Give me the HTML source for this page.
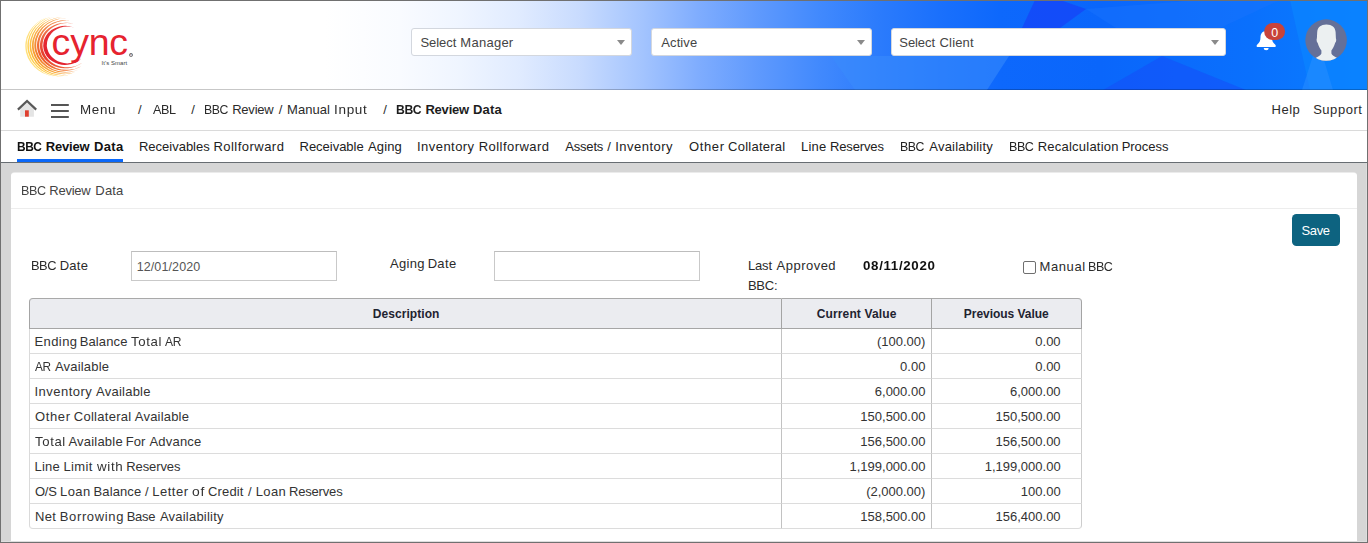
<!DOCTYPE html>
<html lang="en">
<head>
<meta charset="utf-8">
<title>BBC Review Data</title>
<style>
*{box-sizing:border-box;margin:0;padding:0}
html,body{width:1368px;height:543px;overflow:hidden;background:#d6d6d6}
body{position:relative;font-family:"Liberation Sans","DejaVu Sans",sans-serif;font-size:13px;color:#2b2b2b}
.t{position:absolute;display:block;white-space:nowrap;line-height:16px}
th,td{position:relative;font-weight:normal;text-align:left}
.b{position:absolute}
#header{left:0;top:0;width:1368px;height:90px;background:linear-gradient(90deg,#fff 0,#fff 325px,#f9fbff 400px,#eff5ff 460px,#e0ebff 520px,#c8dbfe 580px,#a5c5fe 640px,#7eacfe 700px,#5e99fd 760px,#4189fd 820px,#2b7bfc 880px,#1a70fc 940px,#0d68fc 1000px,#0a66fb 1100px,#0a70fd 1250px,#0a7eff 1368px)}
.sel{position:absolute;top:28px;height:28px;background:#fff;border:1px solid #d3d7de;border-radius:3px}
.sel i{position:absolute;right:6px;top:11px;width:0;height:0;border-left:4px solid transparent;border-right:4px solid transparent;border-top:5px solid #8a8a8a}
.inp{position:absolute;top:251px;width:206px;height:30px;border:1px solid #c9c9c9;border-top-color:#bdbdbd;background:#fff}
table{position:absolute;left:29px;top:298px;width:1053px;border-collapse:separate;border-spacing:0}
th{height:31px;background:#ebecf0;border-top:1px solid #a9a9a9;border-bottom:1px solid #a6a6a6;border-right:1px solid #a4a4a4}
td{height:25px;border-bottom:1px solid #dcdcdc;border-right:1px solid #c2c2c2}
th:first-child{border-left:1px solid #a4a4a4;border-top-left-radius:4px}
th:last-child{border-top-right-radius:4px}
td:first-child{border-left:1px solid #dadada}
td:last-child{border-right-color:#cdcdcd}
tr:last-child td:first-child{border-bottom-left-radius:4px}
tr:last-child td:last-child{border-bottom-right-radius:4px}
</style>
</head>
<body>
<div class="b" id="header"></div>
<svg class="b" style="left:820px;top:0" width="548" height="90" viewBox="820 0 548 90">
<polygon points="831,56 1009,56 987,90 855,90" fill="#3a8cfc" opacity=".55"/>
<polygon points="1035,0 1060,0 1086,9 1060,28 1022,28" fill="#1546f8" opacity=".8"/>
<polygon points="1103,90 1162,56 1246,90" fill="#1450f8" opacity=".6"/>
<polygon points="1086,9 1200,0 1280,0 1160,56" fill="#1a74fc" opacity=".45"/>
<polygon points="1290,0 1368,0 1368,90 1310,90" fill="#0a84ff" opacity=".7"/>
<polygon points="1302,90 1318,40 1333,90" fill="#2a90ff" opacity=".5"/>
</svg>
<div class="b" style="left:0;top:89px;width:1368px;height:1px;background:rgba(0,0,0,.22)"></div>
<div class="b" style="left:0;top:90px;width:1368px;height:40px;background:#fff"></div>
<div class="b" style="left:0;top:130px;width:1368px;height:1px;background:#dadada"></div>
<div class="b" style="left:0;top:131px;width:1368px;height:31px;background:#fff"></div>
<div class="b" style="left:0;top:162px;width:1368px;height:1px;background:#676d72"></div>
<svg class="b" style="left:0;top:0" width="160" height="89" viewBox="0 0 160 89">
<defs><linearGradient id="lg0" x1="0" y1="0" x2=".45" y2="1"><stop offset="0" stop-color="#e63739"/><stop offset=".6" stop-color="#e3202e"/><stop offset="1" stop-color="#e3202e"/></linearGradient><linearGradient id="lg1" x1="0" y1="0" x2=".45" y2="1"><stop offset="0" stop-color="#f38e5b"/><stop offset=".6" stop-color="#e73b2c"/><stop offset="1" stop-color="#ed6039"/></linearGradient><linearGradient id="lg2" x1="0" y1="0" x2=".45" y2="1"><stop offset="0" stop-color="#f69e5a"/><stop offset=".6" stop-color="#ec5a29"/><stop offset="1" stop-color="#f17837"/></linearGradient><linearGradient id="lg3" x1="0" y1="0" x2=".45" y2="1"><stop offset="0" stop-color="#f8ae58"/><stop offset=".6" stop-color="#f17a27"/><stop offset="1" stop-color="#f49035"/></linearGradient><linearGradient id="lg4" x1="0" y1="0" x2=".45" y2="1"><stop offset="0" stop-color="#fabe5c"/><stop offset=".6" stop-color="#f69a2d"/><stop offset="1" stop-color="#f8a83a"/></linearGradient><linearGradient id="lg5" x1="0" y1="0" x2=".45" y2="1"><stop offset="0" stop-color="#fdcc5f"/><stop offset=".6" stop-color="#fbb534"/><stop offset="1" stop-color="#fcbc3f"/></linearGradient><linearGradient id="lg6" x1="0" y1="0" x2=".45" y2="1"><stop offset="0" stop-color="#ffd96d"/><stop offset=".6" stop-color="#ffd050"/><stop offset="1" stop-color="#ffd054"/></linearGradient><linearGradient id="lg7" x1="0" y1="0" x2=".45" y2="1"><stop offset="0" stop-color="#ffe182"/><stop offset=".6" stop-color="#ffe07a"/><stop offset="1" stop-color="#ffdc74"/></linearGradient><filter id="bl" x="-10%" y="-10%" width="120%" height="120%"><feGaussianBlur stdDeviation=".42"/></filter></defs>
<g filter="url(#bl)"><path transform="translate(65.1 0) scale(1.12 1) translate(-65.1 0)" d="M73.36 27.73A19.55 19.55 0 1 0 79.86 58.28A18.36 18.36 0 1 1 73.36 27.73Z" fill="url(#lg0)"/>
<path transform="translate(65.5 0) scale(1.12 1) translate(-65.5 0)" d="M72.56 23.76A22.86 22.86 0 1 0 80.79 62.49A22.10 22.10 0 1 1 72.56 23.76Z" fill="url(#lg1)"/>
<path transform="translate(65.2 0) scale(1.12 1) translate(-65.2 0)" d="M70.00 20.78A25.18 25.18 0 1 0 79.64 66.13A24.65 24.65 0 1 1 70.00 20.78Z" fill="url(#lg2)"/>
<path transform="translate(64.8 0) scale(1.12 1) translate(-64.8 0)" d="M66.70 18.23A27.23 27.23 0 1 0 77.58 69.44A26.88 26.88 0 1 1 66.70 18.23Z" fill="url(#lg3)"/>
<path transform="translate(64.0 0) scale(1.12 1) translate(-64.0 0)" d="M62.50 16.88A28.66 28.66 0 1 0 74.27 72.26A28.47 28.47 0 1 1 62.50 16.88Z" fill="url(#lg4)"/>
<path transform="translate(62.9 0) scale(1.12 1) translate(-62.9 0)" d="M57.72 16.28A29.82 29.82 0 1 0 70.11 74.59A29.81 29.81 0 0 1 57.72 16.28Z" fill="url(#lg5)"/>
<path transform="translate(61.5 0) scale(1.12 1) translate(-61.5 0)" d="M52.57 16.60A30.54 30.54 0 0 0 65.22 76.11A30.72 30.72 0 0 1 52.57 16.60Z" fill="url(#lg6)"/>
<path transform="translate(60.2 0) scale(1.12 1) translate(-60.2 0)" d="M47.53 17.53A31.16 31.16 0 0 0 60.20 77.16A31.56 31.56 0 0 1 47.53 17.53Z" fill="url(#lg7)"/></g>
<text x="51.6" y="54.7" font-family="'Liberation Sans',sans-serif" font-size="37.5" fill="#e6232f" letter-spacing="-0.2">cync</text>
<text x="101.5" y="65" font-family="'Liberation Sans',sans-serif" font-size="6" fill="#444" letter-spacing=".05">It's Smart</text>
<circle cx="131" cy="55" r="1.6" fill="none" stroke="#666" stroke-width=".8"/>
<text x="129.9" y="56" font-family="'Liberation Sans',sans-serif" font-size="2.8" fill="#666">R</text>
</svg>
<div class="sel" style="left:411px;width:221px">
<span class="t" style="left:8.54px;top:6px;letter-spacing:-0.084px;color:#444;">Select</span>
<span class="t" style="left:48.34px;top:6px;letter-spacing:0.26px;color:#444;">Manager</span>
<i></i></div>
<div class="sel" style="left:651px;width:221px">
<span class="t" style="left:9.3px;top:6px;letter-spacing:0.088px;color:#444;">Active</span>
<i></i></div>
<div class="sel" style="left:891px;width:335px">
<span class="t" style="left:7.34px;top:6px;letter-spacing:-0.084px;color:#444;">Select</span>
<span class="t" style="left:47.58px;top:6px;letter-spacing:0.148px;color:#444;">Client</span>
<i></i></div>
<svg class="b" style="left:1250px;top:14px" width="110" height="56" viewBox="1250 14 110 56">
<path d="M1266.200 31c-3.700 0-5.700 2.600-5.700 6.300c0 3.200-.9 5.400-3.200 7.300c-.5.500-.7.900-.7 1.300c0 .6.500 1.100 1.200 1.100h16.800c.7 0 1.200-.5 1.200-1.100c0-.4-.2-.8-.7-1.300c-2.300-1.900-3.200-4.100-3.200-7.300c0-3.700-2-6.300-5.700-6.300z" fill="#fff"/>
<path d="M1263.700 48a2.500 2.300 0 0 0 5 0z" fill="#fff"/>
<rect x="1264.200" y="23.100" width="20.800" height="16.800" rx="8.200" fill="#c8433a"/>
<text x="1274.700" y="37.200" text-anchor="middle" font-family="'Liberation Sans',sans-serif" font-size="12.500" fill="#fff">0</text>
<circle cx="1326.100" cy="40.100" r="20.800" fill="#657098"/>
<clipPath id="av"><circle cx="1326.100" cy="40.100" r="20.600"/></clipPath>
<g clip-path="url(#av)" fill="#ecf0f1">
<path d="M1326.400 24.600c-5.700 0-8.800 2.800-9.200 7.400l-.3 6.300c-.6 1.600-.3 3.600.8 4.700c.9 3 2.300 5.500 3.700 7.500v3c-.4 2-3.400 3-6.900 5l-2.500 3.500v1h28.800v-1l-2.500-3.500c-3.500-2-6.500-3-6.900-5v-3c1.400-2 2.800-4.500 3.700-7.500c1.100-1.100 1.400-3.100.8-4.700l-.3-6.300c-.4-4.600-3.500-7.400-9.200-7.400z"/>
</g>
</svg>
<svg class="b" style="left:14px;top:96px" width="60" height="26" viewBox="14 96 60 26">
<path d="M20.200 108.500v8.200h13.700v-8.200l-6.850-6.400z" fill="#e4e4e4"/>
<rect x="25" y="110.300" width="3.800" height="6.400" fill="#df4030"/>
<path d="M17.900 109.600l9.150-8.700l9.150 8.700" fill="none" stroke="#585858" stroke-width="2.200" stroke-linecap="butt" stroke-linejoin="miter"/>
<rect x="51" y="104" width="17.800" height="2" fill="#555"/>
<rect x="51" y="110" width="17.800" height="2" fill="#555"/>
<rect x="51" y="116" width="17.800" height="2" fill="#555"/>
</svg>
<span class="t" style="left:79.71px;top:102px;letter-spacing:0.65px;transform-origin:0 0;transform:scaleX(1.0291);">Menu</span>
<span class="t" style="left:137.9px;top:102px;">/</span>
<span class="t" style="left:152.8px;top:102px;letter-spacing:-0.45px;transform-origin:0 0;transform:scaleX(0.9719);">ABL</span>
<span class="t" style="left:191.3px;top:102px;">/</span>
<span class="t" style="left:203.75px;top:102px;letter-spacing:-0.45px;transform-origin:0 0;transform:scaleX(0.9438);">BBC</span>
<span class="t" style="left:232.14px;top:102px;letter-spacing:-0.202px;">Review</span>
<span class="t" style="left:278.8px;top:102px;">/</span>
<span class="t" style="left:287.04px;top:102px;letter-spacing:0.05px;">Manual</span>
<span class="t" style="left:334.46px;top:102px;letter-spacing:0.65px;transform-origin:0 0;transform:scaleX(1.0404);">Input</span>
<span class="t" style="left:383.2px;top:102px;">/</span>
<span class="t" style="left:1271.54px;top:102px;letter-spacing:0.49px;">Help</span>
<span class="t" style="left:1313.14px;top:102px;letter-spacing:0.547px;">Support</span>
<span class="t" style="left:396.24px;top:102px;letter-spacing:-0.45px;font-weight:bold;color:#1d1d1d;transform-origin:0 0;transform:scaleX(0.9377);">BBC</span>
<span class="t" style="left:425.39px;top:102px;letter-spacing:-0.193px;font-weight:bold;color:#1d1d1d;">Review</span>
<span class="t" style="left:472.89px;top:102px;letter-spacing:0.251px;font-weight:bold;color:#1d1d1d;">Data</span>
<span class="t" style="left:16.86px;top:139px;letter-spacing:-0.45px;font-weight:bold;color:#111;transform-origin:0 0;transform:scaleX(0.9148);">BBC</span>
<span class="t" style="left:45.79px;top:139px;letter-spacing:-0.173px;font-weight:bold;color:#111;">Review</span>
<span class="t" style="left:94.09px;top:139px;letter-spacing:0.318px;font-weight:bold;color:#111;">Data</span>
<div class="b" style="left:17px;top:159px;width:106px;height:3px;background:#0a68fa"></div>
<span class="t" style="left:138.91px;top:139px;letter-spacing:0.002px;color:#222;">Receivables</span>
<span class="t" style="left:213.44px;top:139px;letter-spacing:0.471px;color:#222;">Rollforward</span>
<span class="t" style="left:299.54px;top:139px;letter-spacing:-0.023px;color:#222;">Receivable</span>
<span class="t" style="left:368.1px;top:139px;letter-spacing:0.086px;color:#222;">Aging</span>
<span class="t" style="left:417.01px;top:139px;letter-spacing:0.452px;color:#222;">Inventory</span>
<span class="t" style="left:478.64px;top:139px;letter-spacing:0.471px;color:#222;">Rollforward</span>
<span class="t" style="left:565.2px;top:139px;letter-spacing:-0.175px;color:#222;">Assets</span>
<span class="t" style="left:607.2px;top:139px;color:#222;">/</span>
<span class="t" style="left:615.31px;top:139px;letter-spacing:0.464px;color:#222;">Inventory</span>
<span class="t" style="left:689.04px;top:139px;letter-spacing:0.613px;color:#222;">Other</span>
<span class="t" style="left:728.08px;top:139px;letter-spacing:0.249px;color:#222;">Collateral</span>
<span class="t" style="left:801.04px;top:139px;letter-spacing:0.176px;color:#222;">Line</span>
<span class="t" style="left:829.94px;top:139px;letter-spacing:-0.13px;color:#222;">Reserves</span>
<span class="t" style="left:900.2px;top:139px;letter-spacing:-0.45px;color:#222;transform-origin:0 0;transform:scaleX(0.9458);">BBC</span>
<span class="t" style="left:929.3px;top:139px;letter-spacing:0.211px;color:#222;">Availability</span>
<span class="t" style="left:1009.18px;top:139px;letter-spacing:-0.45px;color:#222;transform-origin:0 0;transform:scaleX(0.9623);">BBC</span>
<span class="t" style="left:1037.74px;top:139px;letter-spacing:0.226px;color:#222;">Recalculation</span>
<span class="t" style="left:1121.64px;top:139px;letter-spacing:-0.027px;color:#222;">Process</span>
<div class="b" style="left:11px;top:172px;width:1346px;height:380px;background:#ebebeb;border-radius:4px 4px 0 0"></div>
<div class="b" style="left:11px;top:173px;width:1346px;height:380px;background:#fff;border-radius:3px 3px 0 0"></div>
<div class="b" style="left:11px;top:208px;width:1346px;height:1px;background:#ededed"></div>
<span class="t" style="left:20.67px;top:182.5px;letter-spacing:-0.45px;color:#444;transform-origin:0 0;transform:scaleX(0.9664);">BBC</span>
<span class="t" style="left:49.24px;top:182.5px;letter-spacing:-0.222px;color:#444;">Review</span>
<span class="t" style="left:95.34px;top:182.5px;letter-spacing:0.161px;color:#444;">Data</span>
<div class="b" style="left:1292px;top:214px;width:48px;height:32px;border-radius:4.5px;background:#0d6380"><span class="t" style="left:9.6px;top:9px;letter-spacing:-0.4px;color:#fff;">Save</span></div>
<span class="t" style="left:30.85px;top:258px;letter-spacing:-0.45px;transform-origin:0 0;transform:scaleX(0.9870);">BBC</span>
<span class="t" style="left:59.74px;top:258px;letter-spacing:0.248px;">Date</span>
<div class="inp" style="left:131px"><span class="t" style="left:4.66px;top:7.4px;font-size:12.5px;letter-spacing:0.114px;color:#555;">12/01/2020</span></div>
<span class="t" style="left:390.1px;top:255.5px;letter-spacing:0.311px;">Aging</span>
<span class="t" style="left:427.64px;top:255.5px;letter-spacing:0.348px;">Date</span>
<div class="inp" style="left:494px"></div>
<span class="t" style="left:747.94px;top:258.3px;letter-spacing:-0.153px;">Last</span>
<span class="t" style="left:776.6px;top:258.3px;letter-spacing:0.478px;">Approved</span>
<span class="t" style="left:747.94px;top:278.3px;letter-spacing:-0.235px;">BBC:</span>
<span class="t" style="left:863.09px;top:258.3px;letter-spacing:0.65px;font-weight:bold;color:#111;transform-origin:0 0;transform:scaleX(1.0243);">08/11/2020</span>
<div class="b" style="left:1023px;top:261px;width:13px;height:13px;border:1px solid #6f6f6f;background:#fff;border-radius:2px"></div>
<span class="t" style="left:1039.44px;top:259.2px;letter-spacing:0.61px;">Manual</span>
<span class="t" style="left:1088.48px;top:259.2px;letter-spacing:-0.45px;transform-origin:0 0;transform:scaleX(0.9623);">BBC</span>
<table>
<tr><th style="width:753px"><span class="t" style="left:342.8px;top:6.6px;font-size:12px;letter-spacing:0.06px;font-weight:bold;color:#1f2330;">Description</span></th><th style="width:150px"><span class="t" style="left:34.7px;top:6.6px;font-size:12px;letter-spacing:0.14px;font-weight:bold;color:#1f2330;">Current Value</span></th><th><span class="t" style="left:31.8px;top:6.6px;font-size:12px;letter-spacing:-0.04px;font-weight:bold;color:#1f2330;">Previous Value</span></th></tr>
<tr><td>
<span class="t" style="left:4.54px;top:4.7px;letter-spacing:0.395px;color:#333;">Ending</span>
<span class="t" style="left:49.64px;top:4.7px;letter-spacing:0.138px;color:#333;">Balance</span>
<span class="t" style="left:101.05px;top:4.7px;letter-spacing:0.65px;color:#333;transform-origin:0 0;transform:scaleX(1.0143);">Total</span>
<span class="t" style="left:134.8px;top:4.7px;letter-spacing:-0.45px;color:#333;transform-origin:0 0;transform:scaleX(0.9276);">AR</span>
</td><td><span class="t" style="top:4.7px;color:#333;right:5.6px;">(100.00)</span></td><td><span class="t" style="top:4.7px;color:#333;right:20.4px;">0.00</span></td></tr>
<tr><td>
<span class="t" style="left:5.0px;top:4.7px;letter-spacing:-0.45px;color:#333;transform-origin:0 0;transform:scaleX(0.9100);">AR</span>
<span class="t" style="left:24.9px;top:4.7px;letter-spacing:0.203px;color:#333;">Available</span>
</td><td><span class="t" style="top:4.7px;color:#333;right:5.6px;">0.00</span></td><td><span class="t" style="top:4.7px;color:#333;right:20.4px;">0.00</span></td></tr>
<tr><td>
<span class="t" style="left:4.41px;top:4.7px;letter-spacing:0.489px;color:#333;">Inventory</span>
<span class="t" style="left:66.1px;top:4.7px;letter-spacing:0.228px;color:#333;">Available</span>
</td><td><span class="t" style="top:4.7px;color:#333;right:5.6px;">6,000.00</span></td><td><span class="t" style="top:4.7px;color:#333;right:20.4px;">6,000.00</span></td></tr>
<tr><td>
<span class="t" style="left:5.04px;top:4.7px;letter-spacing:0.613px;color:#333;">Other</span>
<span class="t" style="left:43.78px;top:4.7px;letter-spacing:0.282px;color:#333;">Collateral</span>
<span class="t" style="left:104.8px;top:4.7px;letter-spacing:0.203px;color:#333;">Available</span>
</td><td><span class="t" style="top:4.7px;color:#333;right:5.6px;">150,500.00</span></td><td><span class="t" style="top:4.7px;color:#333;right:20.4px;">150,500.00</span></td></tr>
<tr><td>
<span class="t" style="left:5.05px;top:4.7px;letter-spacing:0.65px;color:#333;transform-origin:0 0;transform:scaleX(1.0074);">Total</span>
<span class="t" style="left:38.4px;top:4.7px;letter-spacing:0.215px;color:#333;">Available</span>
<span class="t" style="left:95.64px;top:4.7px;letter-spacing:0.083px;color:#333;">For</span>
<span class="t" style="left:119.5px;top:4.7px;letter-spacing:0.192px;color:#333;">Advance</span>
</td><td><span class="t" style="top:4.7px;color:#333;right:5.6px;">156,500.00</span></td><td><span class="t" style="top:4.7px;color:#333;right:20.4px;">156,500.00</span></td></tr>
<tr><td>
<span class="t" style="left:4.44px;top:4.7px;letter-spacing:0.242px;color:#333;">Line</span>
<span class="t" style="left:33.44px;top:4.7px;letter-spacing:0.341px;color:#333;">Limit</span>
<span class="t" style="left:67.16px;top:4.7px;letter-spacing:0.65px;color:#333;transform-origin:0 0;transform:scaleX(1.0272);">with</span>
<span class="t" style="left:96.34px;top:4.7px;letter-spacing:-0.115px;color:#333;">Reserves</span>
</td><td><span class="t" style="top:4.7px;color:#333;right:5.6px;">1,199,000.00</span></td><td><span class="t" style="top:4.7px;color:#333;right:20.4px;">1,199,000.00</span></td></tr>
<tr><td>
<span class="t" style="left:5.04px;top:4.7px;letter-spacing:-0.293px;color:#333;">O/S</span>
<span class="t" style="left:30.04px;top:4.7px;letter-spacing:0.412px;color:#333;">Loan</span>
<span class="t" style="left:63.54px;top:4.7px;letter-spacing:0.104px;color:#333;">Balance</span>
<span class="t" style="left:114.9px;top:4.7px;color:#333;">/</span>
<span class="t" style="left:122.34px;top:4.7px;letter-spacing:0.485px;color:#333;">Letter</span>
<span class="t" style="left:161.87px;top:4.7px;letter-spacing:0.65px;color:#333;transform-origin:0 0;transform:scaleX(1.0662);">of</span>
<span class="t" style="left:177.97px;top:4.7px;letter-spacing:0.159px;color:#333;">Credit</span>
<span class="t" style="left:218.1px;top:4.7px;color:#333;">/</span>
<span class="t" style="left:225.74px;top:4.7px;letter-spacing:0.378px;color:#333;">Loan</span>
<span class="t" style="left:258.94px;top:4.7px;letter-spacing:-0.172px;color:#333;">Reserves</span>
</td><td><span class="t" style="top:4.7px;color:#333;right:5.6px;">(2,000.00)</span></td><td><span class="t" style="top:4.7px;color:#333;right:20.4px;">100.00</span></td></tr>
<tr><td>
<span class="t" style="left:4.94px;top:4.7px;letter-spacing:0.341px;color:#333;">Net</span>
<span class="t" style="left:29.74px;top:4.7px;letter-spacing:0.641px;color:#333;">Borrowing</span>
<span class="t" style="left:96.74px;top:4.7px;letter-spacing:-0.309px;color:#333;">Base</span>
<span class="t" style="left:129.9px;top:4.7px;letter-spacing:0.22px;color:#333;">Availability</span>
</td><td><span class="t" style="top:4.7px;color:#333;right:5.6px;">158,500.00</span></td><td><span class="t" style="top:4.7px;color:#333;right:20.4px;">156,400.00</span></td></tr>
</table>
<div class="b" style="left:1px;top:163px;width:1366px;height:379px;border:solid #dedede;border-width:0 1px 1px 0"></div>
<div class="b" style="left:0;top:0;width:1368px;height:543px;border:1px solid #707070"></div>
</body>
</html>
